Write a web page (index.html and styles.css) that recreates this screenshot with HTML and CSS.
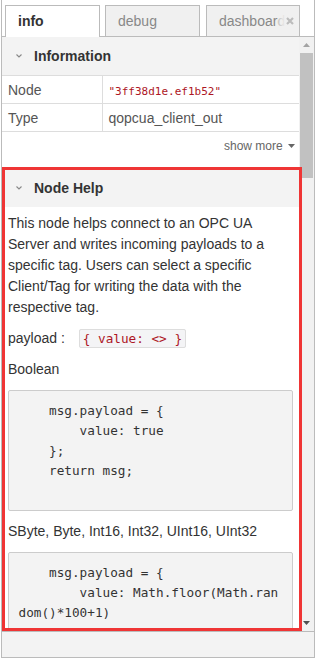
FILE: index.html
```html
<!DOCTYPE html>
<html lang="en">
<head>
    <meta charset="UTF-8">
    <title>Node-RED sidebar - info</title>
    <link rel="stylesheet" href="styles.css">
</head>
<body>
    <div class="sidebar">
        <ul class="tabs">
            <li class="tab active">info</li>
            <li class="tab">debug</li>
            <li class="tab">dashboard
                <span class="tab-close">
                    <svg width="8" height="8" viewBox="0 0 8 8"><path d="M1 1L7 7M7 1L1 7" stroke="#bcbcbc" stroke-width="2.2" fill="none"/></svg>
                </span>
            </li>
        </ul>

        <div class="panel">
            <div class="panel-content">
                <div class="section">
                    <div class="section-header">
                        <svg class="chevron" width="6" height="4" viewBox="0 0 6 4"><path d="M0.5 0.5L3 3L5.5 0.5" stroke="#888" stroke-width="1.1" fill="none"/></svg>
                        Information
                    </div>
                    <table class="node-info">
                        <tr>
                            <td>Node</td>
                            <td><span class="node-id">"3ff38d1e.ef1b52"</span></td>
                        </tr>
                        <tr>
                            <td>Type</td>
                            <td>qopcua_client_out</td>
                        </tr>
                    </table>
                    <div class="show-more">show more
                        <svg width="7" height="4" viewBox="0 0 7 4"><path d="M0 0H7L3.5 4Z" fill="#666"/></svg>
                    </div>
                </div>

                <div class="section">
                    <div class="section-header">
                        <svg class="chevron" width="6" height="4" viewBox="0 0 6 4"><path d="M0.5 0.5L3 3L5.5 0.5" stroke="#888" stroke-width="1.1" fill="none"/></svg>
                        Node Help
                    </div>
                    <div class="help">
                        <p>This node helps connect to an OPC UA Server and writes incoming payloads to a specific tag. Users can select a specific Client/Tag for writing the data with the respective tag.</p>
                        <p>payload : <code>{ value: &lt;&gt; }</code></p>
                        <p>Boolean</p>
<pre>    msg.payload = {
        value: true
    };
    return msg;

</pre>
                        <p>SByte, Byte, Int16, Int32, UInt16, UInt32</p>
<pre>    msg.payload = {
        value: Math.floor(Math.random()*100+1)
    };
    return msg;

</pre>
                    </div>
                </div>
            </div>

            <div class="scrollbar">
                <div class="scroll-btn">
                    <svg width="7" height="4" viewBox="0 0 7 4"><path d="M3.5 0L7 4H0Z" fill="#a3a3a3"/></svg>
                </div>
                <div class="scroll-thumb"></div>
                <div class="scroll-track"></div>
                <div class="scroll-btn">
                    <svg width="7" height="4" viewBox="0 0 7 4"><path d="M0 0H7L3.5 4Z" fill="#505050"/></svg>
                </div>
            </div>
        </div>

        <div class="footer"></div>

        <!-- marks the help section -->
        <div class="highlight"></div>
    </div>
</body>
</html>
```

FILE: styles.css
```css
* {
    margin: 0;
    padding: 0;
    box-sizing: border-box;
}

body {
    font-family: 'Liberation Sans', Arial, sans-serif;
    font-size: 14px;
    color: #333;
    background: #fff;
}

.sidebar {
    position: relative;
    margin-left: 1px;
    width: 314px;
    height: 658px;
    border: 1px solid #bbb;
    border-top: none;
    background: #fff;
}

/* tabs */
.tabs {
    list-style: none;
    display: flex;
    align-items: flex-end;
    gap: 5px;
    height: 37px;
    padding-left: 3px;
    border-bottom: 1px solid #bbb;
}

.tab {
    position: relative;
    width: 95px;
    height: 31px;
    padding-left: 12px;
    line-height: 30px;
    border: 1px solid #bbb;
    border-bottom: none;
    background: #f0f0f0;
    color: #888;
    overflow: hidden;
    white-space: nowrap;
}

.tab:last-child {
    width: 94px;
    margin-left: 1px;
}

.tab.active {
    height: 32px;
    margin-bottom: -1px;
    background: #fff;
    color: #333;
    font-weight: bold;
}

.tab-close {
    position: absolute;
    top: 0;
    right: 0;
    bottom: 0;
    width: 21px;
    padding-right: 5px;
    display: flex;
    align-items: center;
    justify-content: flex-end;
    background: linear-gradient(to right, rgba(240, 240, 240, 0.55) 0, #f0f0f0 35%);
}

/* panel with scrollbar */
.panel {
    display: flex;
    height: 594px;
}

.panel-content {
    flex: 1;
    overflow: hidden;
}

.section-header {
    display: flex;
    align-items: center;
    height: 38px;
    padding-left: 14px;
    background: #f3f3f3;
    font-weight: bold;
    color: #333;
}

.chevron {
    margin-right: 12px;
}

.node-info {
    width: 100%;
    border-collapse: collapse;
    border-top: 1px solid #ddd;
}

.node-info td {
    height: 28px;
    padding: 0 6px;
    border-bottom: 1px solid #ddd;
    color: #555;
}

.node-info td:first-child {
    width: 100px;
    border-right: 1px solid #ddd;
}

.node-id {
    font-family: 'DejaVu Sans Mono', monospace;
    font-size: 11px;
    color: #ad1625;
}

.show-more {
    height: 37px;
    padding: 6px 4px 0 0;
    text-align: right;
    font-size: 12px;
    line-height: 16px;
    color: #666;
}

.show-more svg {
    margin-left: 2px;
    vertical-align: 2px;
}

/* help text */
.help {
    padding: 6px;
    line-height: 21px;
    color: #333;
}

.help p {
    margin-bottom: 10px;
}

.help code {
    font-family: 'DejaVu Sans Mono', monospace;
    font-size: 12.7px;
    color: #ad1625;
    background: #f4f4f6;
    border: 1px solid #ddd;
    border-radius: 2px;
    padding: 1px 3px;
    margin-left: 10px;
}

.help pre {
    font-family: 'DejaVu Sans Mono', monospace;
    font-size: 12.7px;
    line-height: 20px;
    color: #333;
    background: #f3f3f3;
    border: 1px solid #ccc;
    border-radius: 2px;
    padding: 9.5px;
    margin-bottom: 10px;
    white-space: pre-wrap;
    word-break: break-all;
}

/* fake scrollbar */
.scrollbar {
    width: 15px;
    display: flex;
    flex-direction: column;
    background: #f1f1f1;
}

.scroll-btn {
    height: 16px;
    display: flex;
    align-items: center;
    justify-content: center;
}

.scroll-thumb {
    height: 125px;
    margin: 0 1px;
    background: #c1c1c1;
}

.scroll-track {
    flex: 1;
}

.footer {
    height: 26px;
    border-top: 1px solid #bbb;
    background: #f3f3f3;
}

.highlight {
    position: absolute;
    left: 0;
    top: 167px;
    width: 300px;
    height: 464px;
    border: 3px solid #ef3535;
    pointer-events: none;
}
```
